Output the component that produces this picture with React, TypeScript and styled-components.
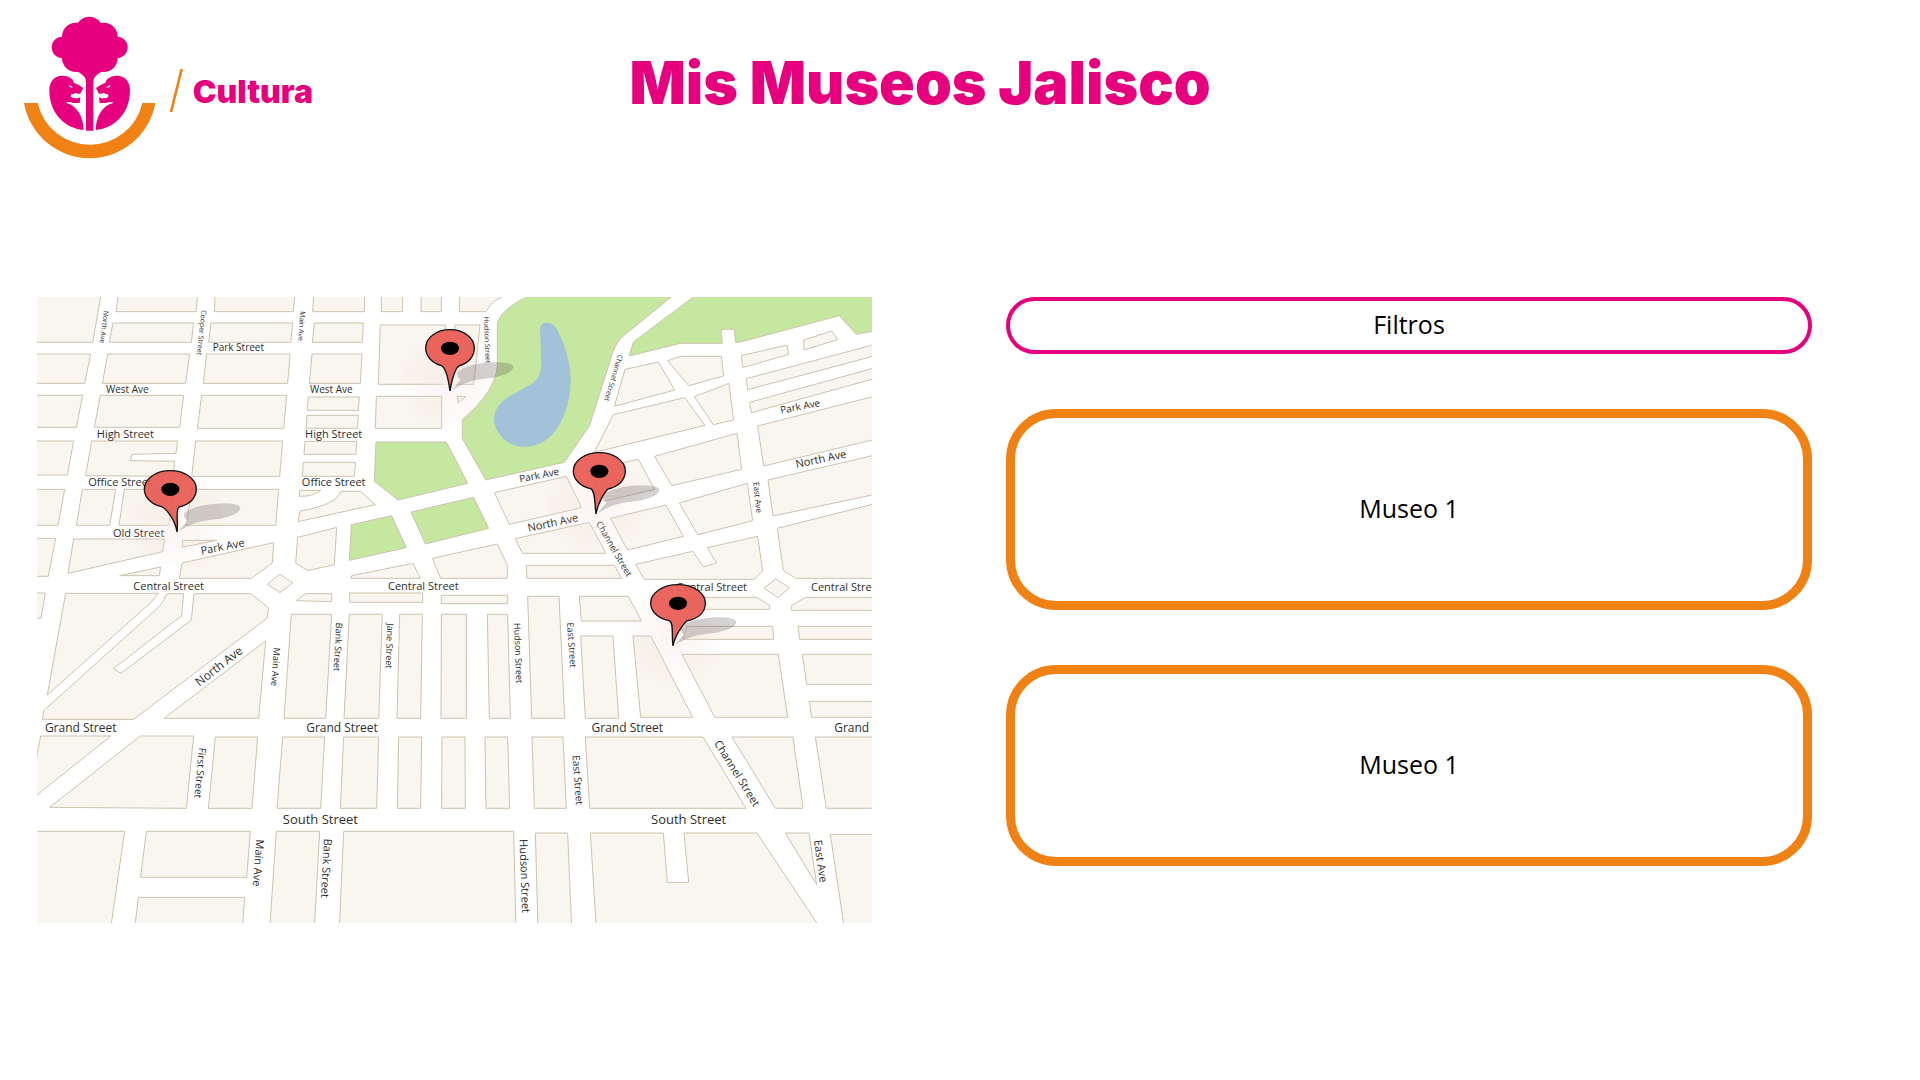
import React from "react";
import styled, { createGlobalStyle } from "styled-components";

const PINK = "#e6007e";
const ORANGE = "#f08114";

const GlobalStyle = createGlobalStyle`
  * { box-sizing: border-box; }
  body {
    margin: 0;
    background: #fff;
    color: #000;
    font-family: "Open Sans", "Noto Sans", sans-serif;
  }
`;

const Page = styled.div`
  display: flex;
  flex-direction: column;
  gap: 136px;
  padding-bottom: 80px;
`;

const Header = styled.header`
  display: grid;
  grid-template-columns: 300px 1fr 300px;
  align-items: start;
  padding: 16px 104px 0 24px;
`;

const HomeLink = styled.a`
  display: block;
  line-height: 0;
`;

const LogoDrawing = styled.svg`
  display: block;
  width: 300px;
  height: 145px;
`;

const LogoWord = styled.text`
  font-family: Inter, sans-serif;
  font-weight: 900;
  font-size: 96px;
  fill: ${PINK};
`;

const Title = styled.h1`
  margin: 0;
  padding-top: 31px;
  color: ${PINK};
  font-family: Inter, sans-serif;
  font-size: 59px;
  font-weight: 900;
  line-height: 72px;
  text-align: center;
  white-space: nowrap;
`;

const Main = styled.main`
  display: grid;
  grid-template-columns: 835fr 806fr;
  gap: 134px;
  align-items: start;
  padding: 0 108px 0 37px;
`;

const MapDrawing = styled.svg`
  display: block;
  width: 100%;
  height: auto;
`;

const Block = styled.path<{ $park?: boolean }>`
  fill: ${(p) => (p.$park ? "#c5e7a0" : "#f9f6ef")};
  stroke: #cdc2ae;
  stroke-width: 3;
`;

const StreetName = styled.text<{ $size: number }>`
  font-family: "Open Sans", "Noto Sans", sans-serif;
  font-size: ${(p) => p.$size * 3}px;
  fill: #2e2e2e;
  text-anchor: middle;
  dominant-baseline: central;
`;

const Panel = styled.section`
  display: flex;
  flex-direction: column;
  gap: 55px;
`;

const FilterButton = styled.button`
  height: 57px;
  border: 4px solid ${PINK};
  border-radius: 29px;
  background: #fff;
  color: #000;
  font: inherit;
  font-size: 25px;
  line-height: 32px;
  padding: 0 0 3px;
  cursor: pointer;
`;

const MuseumList = styled.ul`
  display: flex;
  flex-direction: column;
  gap: 55px;
  margin: 0;
  padding: 0;
  list-style: none;
`;

const MuseumCard = styled.a`
  display: flex;
  align-items: center;
  justify-content: center;
  min-height: 201px;
  padding-bottom: 3px;
  border: 9px solid ${ORANGE};
  border-radius: 50px;
  color: #000;
  font-size: 25px;
  line-height: 32px;
  text-decoration: none;
`;

type Label = [string, number, number, number, number];

interface Sector {
  x: number;
  y: number;
  parks?: string[];
  blocks: string[];
  labels: Label[];
}

// Each sector is drawn at three units per map pixel from its own origin.
const sectors: Sector[] = [
  {
    x: -7,
    y: -7,
    blocks: [
      "M0,15 213,15 188,157 0,157Z",
      "M265,15 503,15 498,65 258,65Z",
      "M555,15 795,15 790,65 553,65Z",
      "M249,99 491,99 484,157 238,157Z",
      "M543,99 788,99 782,157 536,157Z",
      "M0,192 182,192 164,280 0,280Z",
      "M233,192 479,192 467,280 217,280Z",
      "M530,192 780,192 773,280 520,280Z",
      "M0,316 158,316 139,412 0,412Z",
      "M211,316 461,316 449,412 193,412Z",
      "M515,316 770,316 761,415 502,415Z",
      "M0,453 131,453 112,555 0,555Z",
      "M185,453 443,453 438,490 306,493 301,512 434,514 430,559 167,557Z",
      "M497,453 758,453 749,559 485,559Z",
      "M0,598 104,598 84,706 0,706Z",
      "M157,598 257,598 239,706 139,706Z",
      "M283,598 430,598 416,706 267,706Z",
      "M485,598 746,598 737,706 469,706Z",
      "M0,745 77,745 55,859 0,859Z",
      "M131,747 404,747 398,785 114,850Z",
      "M458,751 560,751 457,772Z",
      "M456,819 731,758 727,819 664,865 448,865Z",
      "M269,857 392,831 388,857Z",
      "M712,883 750,852 788,879 750,908Z",
      "M0,909 46,909 33,985 0,985Z",
      "M107,910 385,910Q372,932 341,957L52,1215Z",
      "M411,911 461,911 455,977 250,1136 273,1150 484,990 492,911 663,911 715,953 712,984 311,1288 37,1288 41,1262 385,952Q402,935 411,911Z",
    ],
    labels: [
      ["North Ave", 223, 111, 97, 7],
      ["Cooper Street", 515, 128, 96, 7],
      ["Main Ave", 815, 108, 94, 7],
      ["Park Street", 625, 172, 0, 10],
      ["West Ave", 292, 297, 0, 10],
      ["High Street", 286, 431, 0, 11],
      ["Office Street", 270, 575, 0, 11],
      ["Old Street", 326, 727, 0, 11],
      ["Park Ave", 577, 768, -11, 11],
      ["Central Street", 416, 887, 0, 11],
    ],
  },
  {
    x: 263,
    y: -7,
    parks: [
      "M228,456 439,456 503,580 294,630 223,574Z",
      "M154,704 275,677 319,773 148,811Z",
      "M333,666 521,622 566,715 376,762Z",
      "M700,12Q605,52 592,100L592,225Q590,300 487,389L487,445 557,570 793,517 868,408 925,230 937,190Q950,155 970,138L1125,12Z",
    ],
    blocks: [
      "M41,15 194,15 193,65 38,65Z",
      "M43,99 190,99 187,157 37,157Z",
      "M36,192 186,192 181,280 28,280Z",
      "M25,321 178,321 175,361 22,361Z",
      "M21,376 175,376 172,415 19,415Z",
      "M15,454 171,454 167,493 12,493Z",
      "M10,517 167,517 163,559 7,559Z",
      "M-1,601 63,601Q40,620 -2,619Z",
      "M122,604 182,604 226,644 -6,695 0,663Q110,645 122,604Z",
      "M110,712 103,824 23,842 -13,819 -7,742Z",
      "M155,857 339,820 361,865 153,865Z",
      "M17,911 95,911 95,935 -12,932Z",
      "M149,909 368,909 368,937 149,937Z",
      "M424,916 623,916 623,941 424,941Z",
      "M244,15 308,15 307,65 244,65Z",
      "M364,15 424,15 424,65 363,65Z",
      "M479,15 620,15Q580,30 570,48L557,65 478,65Z",
      "M241,105 437,105 437,118 465,118 465,105 540,105 521,283 235,283Z",
      "M229,319 425,319 425,415 226,415Z",
      "M472,319 498,319 475,339Z",
      "M583,608 799,559 845,653 628,703Z",
      "M646,746 868,697 918,790 667,790Z",
      "M397,805 592,762 622,825 622,865 422,865Z",
      "M679,826 943,826 965,865 681,865Z",
      "M683,919 777,919 794,1285 695,1285Z",
    ],
    labels: [
      ["West Ave", 94, 297, 0, 10],
      ["High Street", 101, 431, 0, 11],
      ["Office Street", 101, 575, 0, 11],
      ["Hudson Street", 562, 150, 88, 7],
      ["Park Ave", 717, 554, -11, 10],
      ["North Ave", 758, 696, -12, 11],
      ["Central Street", 370, 887, 0, 11],
    ],
  },
  {
    x: 523,
    y: -7,
    parks: [
      "M412,12 221,155 207,198 362,160 487,160 483,118 523,118 527,157 545,155 838,77 889,133 950,122 950,12Z",
    ],
    blocks: [
      "M195,238 295,216 344,300 163,349Z",
      "M323,212 362,199 484,199 491,258 386,287Z",
      "M403,320 507,280 521,390 460,404Z",
      "M160,374 374,323 435,406 103,487Z",
      "M544,197 681,165 686,193 548,233Z",
      "M731,150 815,123 833,149 732,180Z",
      "M559,266 950,162 950,196 563,299Z",
      "M569,337 950,232 950,264 574,368Z",
      "M593,408 950,317 950,447 611,528Z",
      "M624,570 950,494 950,612 639,678Z",
      "M284,499 531,430 545,538 335,587Z",
      "M90,540 235,508 284,598 130,634Z",
      "M358,639 562,580 578,692 413,734Z",
      "M151,685 318,645 370,739 203,780Z",
      "M227,823 398,784 431,831 469,819 442,773 593,739 608,842 583,868 253,868Z",
      "M652,715 950,640 950,865 707,865 670,842Z",
      "M612,895 647,867 688,893 655,923Z",
      "M380,922 590,922 629,946 629,958 380,958Z",
      "M736,922 950,922 950,961 694,961 694,947Z",
      "M58,919 205,919 245,993 64,993Z",
    ],
    labels: [
      ["Channel Street", 161, 264, 107, 7],
      ["Park Ave", 720, 348, -11, 10],
      ["North Ave", 782, 505, -12, 11],
      ["East Ave", 595, 622, 84, 8],
      ["Channel Street", 163, 776, 60, 9],
      ["Central Street", 455, 890, 0, 11],
      ["Central Street", 859, 890, 0, 11],
    ],
  },
  {
    x: -7,
    y: 303,
    blocks: [
      "M707,123 686,355 402,355Z",
      "M784,43 905,43 887,355 762,355Z",
      "M32,408 243,408 10,594 10,520Z",
      "M331,408 491,408 469,625 59,622Z",
      "M556,411 683,411 666,625 535,625Z",
      "M758,411 884,411 872,625 741,625Z",
      "M0,694 284,694 242,985 0,985Z",
      "M349,694 661,694 650,832 332,832Z",
      "M325,892 644,892 637,985 314,985Z",
      "M739,694 869,694 853,985 719,985Z",
    ],
    labels: [
      ["North Ave", 566, 198, -38, 12],
      ["Main Ave", 738, 201, 94, 9],
      ["Grand Street", 152, 383, 0, 12],
      ["First Street", 512, 519, 95, 10],
      ["Main Ave", 687, 789, 94, 11],
    ],
  },
  {
    x: 263,
    y: 303,
    blocks: [
      "M148,43 247,43 236,355 132,355Z",
      "M299,43 367,43 362,355 291,355Z",
      "M424,43 499,43 499,355 423,355Z",
      "M562,43 623,43 631,355 568,355Z",
      "M131,411 236,411 230,625 121,625Z",
      "M296,411 365,411 362,625 292,625Z",
      "M426,411 495,411 496,625 425,625Z",
      "M555,411 623,411 629,625 558,625Z",
      "M696,411 789,411 799,625 703,625Z",
      "M131,694 641,694 648,985 118,985Z",
      "M706,699 803,699 815,985 714,985Z",
    ],
    labels: [
      ["Bank Street", 115, 141, 93, 9],
      ["Jane Street", 270, 138, 92, 9],
      ["Hudson Street", 656, 159, 88, 9],
      ["East Street", 816, 135, 86, 9],
      ["Grand Street", 126, 383, 0, 12],
      ["East Street", 835, 540, 86, 10],
      ["South Street", 61, 656, 0, 13],
      ["Bank Street", 81, 805, 93, 11],
      ["Hudson Street", 676, 828, 88, 11],
    ],
  },
  {
    x: 523,
    y: 303,
    blocks: [
      "M380,79 638,79 641,118 370,118Z",
      "M714,79 950,79 950,118 719,118Z",
      "M62,108 159,108 176,355 76,355Z",
      "M219,108 272,108 398,352 242,352Z",
      "M366,163 655,163 683,352 464,352Z",
      "M727,163 950,163 950,253 740,253Z",
      "M748,304 950,304 950,352 755,352Z",
      "M76,411 429,411 558,625 89,625Z",
      "M516,411 699,411 729,625 646,625Z",
      "M766,411 950,411 950,625 799,625Z",
      "M91,699 310,699 322,847 386,847 372,699 591,699 781,985 109,985Z",
      "M676,699 747,699 770,854Z",
      "M811,703 950,703 950,985 853,985Z",
    ],
    labels: [
      ["Grand Street", 202, 383, 0, 12],
      ["Grand", 875, 383, 0, 12],
      ["Channel Street", 533, 519, 58, 11],
      ["South Street", 386, 656, 0, 13],
      ["East Ave", 784, 783, 82, 11],
    ],
  },
];

interface PinProps {
  x: number;
  y: number;
  half: number;
  lean: number;
}

// The tip of the pin is at 0,0; lean is how far the head sits beside it.
const Pin = ({ x, y, half: h, lean: l }: PinProps) => (
  <g transform={`translate(${x} ${y}) scale(0.33333)`}>
    <circle r="150" cy="-30" fill="url(#glow)" />
    <path
      d="M4,-2 32,-34Q14,-50 26,-60Q60,-84 138,-86Q188,-86 190,-72Q188,-52 130,-40Q70,-36 38,-20Z"
      fill="#4b4244"
      fillOpacity="0.24"
    />
    <path
      d={`M0,0C-5,-36 ${l - 12},-70 ${l - 26},-76C${l - h + 20},-84 ${l - h},-104 ${l - h},-129C${l - h},-160 ${l - h / 2 - 4},-184 ${l},-184C${l + h / 2 + 4},-184 ${l + h},-160 ${l + h},-129C${l + h},-102 ${l + h - 20},-82 ${l + 26},-75C${l + 14},-64 5,-30 0,0Z`}
      fill="#e85950"
      fillOpacity="0.92"
      stroke="#111"
      strokeWidth="4"
    />
    <ellipse cx={l} cy="-128" rx="27" ry="20" fill="#000" />
  </g>
);

const CityMap = () => (
  <MapDrawing viewBox="0 0 835 626" role="img" aria-label="Mapa de museos">
    <defs>
      <radialGradient id="glow">
        <stop offset="0" stopColor="#fff" stopOpacity="0.9" />
        <stop offset="0.3" stopColor="#f3dcd6" stopOpacity="0.22" />
        <stop offset="1" stopColor="#e9c4b8" stopOpacity="0" />
      </radialGradient>
    </defs>
    <rect width="835" height="626" fill="#fff" />
    {sectors.map((s, i) => (
      <g key={i} transform={`translate(${s.x} ${s.y}) scale(0.33333)`}>
        {s.parks?.map((d) => <Block key={d} d={d} $park />)}
        {s.blocks.map((d) => (
          <Block key={d} d={d} />
        ))}
      </g>
    ))}
    <path
      transform="translate(263 -7) scale(0.33333)"
      d="M720,115Q722,98 742,98Q762,98 775,125Q812,200 812,270Q812,350 775,410Q735,470 675,470Q625,470 600,435Q582,412 582,385Q585,345 630,318L690,285Q724,265 724,225Z"
      fill="#a1c2d8"
    />
    {sectors.map((s, i) => (
      <g key={i} transform={`translate(${s.x} ${s.y}) scale(0.33333)`}>
        {s.labels.map(([name, x, y, angle, size]) => (
          <StreetName key={`${name}${x}`} $size={size} transform={`translate(${x} ${y}) rotate(${angle})`}>
            {name}
          </StreetName>
        ))}
      </g>
    ))}
    <Pin x={413} y={94} half={73} lean={0} />
    <Pin x={140} y={235} half={78} lean={-20} />
    <Pin x={559} y={217} half={78} lean={10} />
    <Pin x={636} y={349} half={82} lean={15} />
  </MapDrawing>
);

const Lion = () => (
  <path
    fillRule="evenodd"
    d="M188,224C160,224 148,245 148,268C148,335 192,382 251,387C250,350 234,314 197,305Q208,301 219,306L239,306 241,289Q232,294 224,291Q216,293 212,286Q213,277 221,279Q228,273 235,279L242,277 250,261Q236,250 223,246Q219,244 219,237Q206,224 188,224ZM206,252Q214,254 219,259Q209,262 206,252Z"
  />
);

const Logo = () => (
  <LogoDrawing viewBox="72 45 900 435">
    <g fill={PINK}>
      <circle cx="268" cy="87" r="40" />
      <circle cx="228" cy="107" r="42" />
      <circle cx="311" cy="107" r="42" />
      <circle cx="187" cy="139" r="32" />
      <circle cx="351" cy="139" r="32" />
      <circle cx="228" cy="171" r="42" />
      <circle cx="311" cy="171" r="42" />
      <path d="M200,100H338V178L303,213Q280,226 280,242V389H258V242Q258,226 235,213L200,178Z" />
      <Lion />
      <g transform="translate(538 0) scale(-1 1)">
        <Lion />
      </g>
    </g>
    <path d="M72,306H113A161,161 0 0 0 427,306H466A200,200 0 0 1 72,306Z" fill={ORANGE} />
    <path d="M541,204H549L517,333H509Z" fill={ORANGE} />
    <LogoWord x="578" y="305">
      Cultura
    </LogoWord>
  </LogoDrawing>
);

const museums = [
  { id: "museo-a", name: "Museo 1" },
  { id: "museo-b", name: "Museo 1" },
];

export default function App() {
  return (
    <Page>
      <GlobalStyle />
      <Header>
        <HomeLink href="#" aria-label="Cultura">
          <Logo />
        </HomeLink>
        <Title>Mis Museos Jalisco</Title>
      </Header>
      <Main>
        <CityMap />
        <Panel>
          <FilterButton type="button">Filtros</FilterButton>
          <MuseumList>
            {museums.map((m) => (
              <li key={m.id}>
                <MuseumCard href={`#${m.id}`}>{m.name}</MuseumCard>
              </li>
            ))}
          </MuseumList>
        </Panel>
      </Main>
    </Page>
  );
}
